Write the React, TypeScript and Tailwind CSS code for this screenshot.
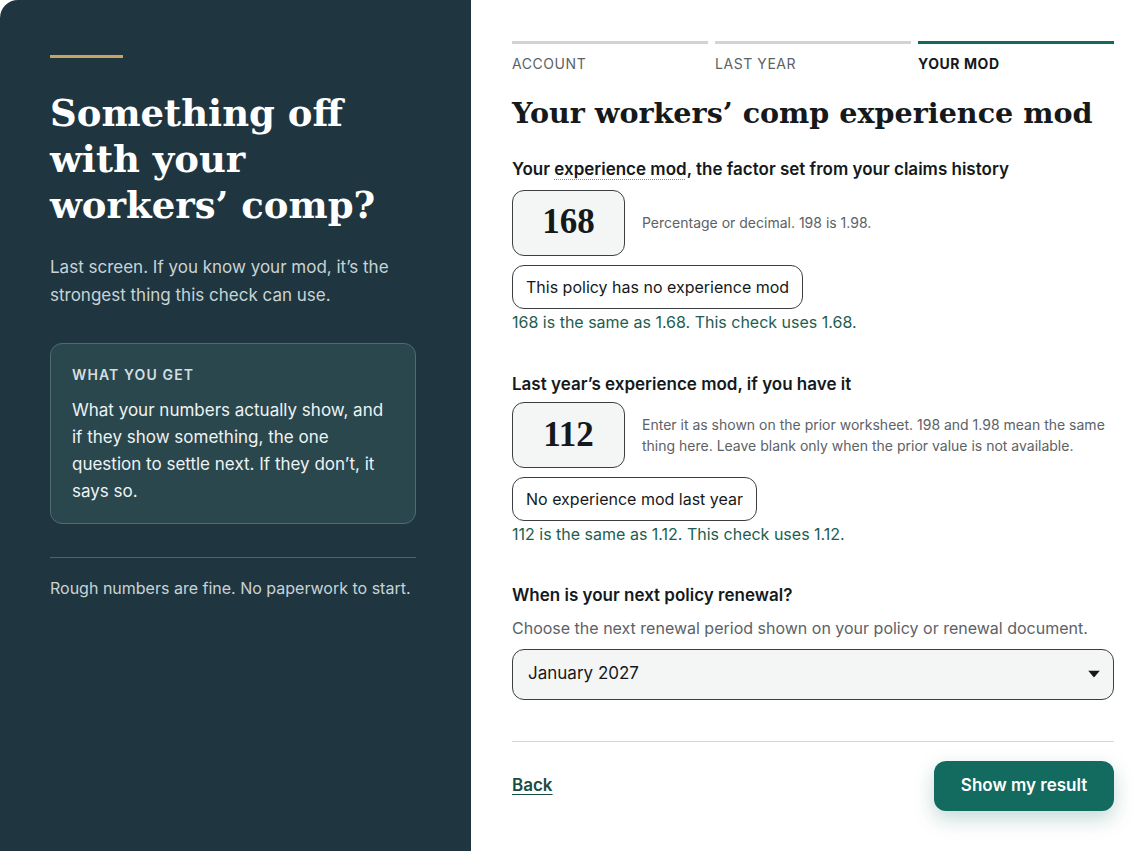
import React, { useState } from "react";

const serif = { fontFamily: '"DejaVu Serif", "Liberation Serif", serif' };
const numSerif = { fontFamily: '"Liberation Serif", "DejaVu Serif", serif' };

const steps = [
	{ label: "Account", active: false },
	{ label: "Last year", active: false },
	{ label: "Your mod", active: true },
];

function ModInput({ value }: { value: string }) {
	return (
		<div
			className="w-[113px] h-[66px] shrink-0 rounded-xl border border-[#3b3f42] bg-[#f4f6f6] flex items-center justify-center text-[35px] font-bold text-[#15191b]"
			style={numSerif}
		>
			{value}
		</div>
	);
}

export default function App() {
	const [renewal, setRenewal] = useState("January 2027");

	return (
		<div className="min-h-screen flex bg-white font-['Inter','Noto_Sans',sans-serif]">
			{/* Left intro panel */}
			<aside className="w-[471px] shrink-0 min-h-[851px] bg-[#1f3640] rounded-tl-[18px] pl-[50px] pr-[55px] pt-[55px]">
				<div className="w-[73px] h-[3px] bg-[#c9a360]" />
				<h1 className="mt-[32px] text-[37px] leading-[46px] font-bold text-white" style={serif}>
					Something off with your workers’ comp?
				</h1>
				<p className="mt-[25px] text-[17px] leading-[28px] text-[#c9d3d5]">
					Last screen. If you know your mod, it’s the strongest thing this check can use.
				</p>
				<div className="mt-[34px] rounded-xl border border-[#516c70] bg-[#2a474e] px-[21px] pt-[20px] pb-[18px]">
					<div className="text-[14px] font-semibold tracking-[0.08em] text-[#d5dedf]">WHAT YOU GET</div>
					<p className="mt-[12px] text-[17px] leading-[27px] text-[#eef3f3]">
						What your numbers actually show, and if they show something, the one question to settle next. If
						they don’t, it says so.
					</p>
				</div>
				<div className="mt-[33px] h-px bg-[#4d666b]" />
				<p className="mt-[18px] text-[16px] text-[#c9d3d5]">Rough numbers are fine. No paperwork to start.</p>
			</aside>

			{/* Right form */}
			<main className="flex-1 pl-[41px] pr-[30px] pt-[41px]">
				<div className="grid grid-cols-3 gap-[7px]">
					{steps.map((s) => (
						<div key={s.label}>
							<div className={s.active ? "h-[3px] bg-[#16685c]" : "h-[3px] bg-[#d3d3d3]"} />
							<div
								className={
									s.active
										? "mt-[9px] text-[14px] uppercase tracking-[0.04em] font-bold text-[#15191b]"
										: "mt-[9px] text-[14px] uppercase tracking-[0.04em] text-[#5c6266]"
								}
							>
								{s.label}
							</div>
						</div>
					))}
				</div>

				<h2
					className="mt-[19px] text-[28.6px] leading-[40px] font-bold text-[#15191b] whitespace-nowrap"
					style={serif}
				>
					Your workers’ comp experience mod
				</h2>

				{/* Current mod */}
				<div className="mt-[24px] text-[17px] font-semibold text-[#15191b]">
					Your{" "}
					<span className="underline decoration-dotted decoration-[#8a8f92] underline-offset-[4px] decoration-1">
						experience mod
					</span>
					, the factor set from your claims history
				</div>
				<div className="mt-[7px] flex items-center gap-[17px]">
					<ModInput value="168" />
					<span className="text-[14px] text-[#5c6266]">Percentage or decimal. 198 is 1.98.</span>
				</div>
				<button className="mt-[9px] h-[44px] px-[13px] rounded-xl border border-[#3b3f42] bg-white text-[16px] text-[#15191b]">
					This policy has no experience mod
				</button>
				<p className="mt-[1px] text-[16px] text-[#1d5e50]">168 is the same as 1.68. This check uses 1.68.</p>

				{/* Last year mod */}
				<div className="mt-[38px] text-[17px] font-semibold text-[#15191b]">
					Last year’s experience mod, if you have it
				</div>
				<div className="mt-[5px] flex items-center gap-[17px]">
					<ModInput value="112" />
					<span className="text-[14px] leading-[21px] text-[#5c6266]">
						Enter it as shown on the prior worksheet. 198 and 1.98 mean the same thing here. Leave blank only
						when the prior value is not available.
					</span>
				</div>
				<button className="mt-[9px] h-[44px] px-[13px] rounded-xl border border-[#3b3f42] bg-white text-[16px] text-[#15191b]">
					No experience mod last year
				</button>
				<p className="mt-[1px] text-[16px] text-[#1d5e50]">112 is the same as 1.12. This check uses 1.12.</p>

				{/* Renewal */}
				<div className="mt-[37px] text-[17px] font-semibold text-[#15191b]">When is your next policy renewal?</div>
				<p className="mt-[7px] text-[16px] text-[#5c6266]">
					Choose the next renewal period shown on your policy or renewal document.
				</p>
				<div className="relative mt-[9px]">
					<select
						value={renewal}
						onChange={(e) => setRenewal(e.target.value)}
						className="w-full h-[51px] appearance-none rounded-xl border border-[#3b3f42] bg-[#f4f6f6] pl-[15px] pr-[40px] text-[17px] text-[#15191b]"
					>
						<option>January 2027</option>
						<option>February 2027</option>
						<option>March 2027</option>
					</select>
					<svg
						className="pointer-events-none absolute right-[14px] top-1/2 -translate-y-1/2"
						width="12"
						height="7"
						viewBox="0 0 12 7"
					>
						<path d="M0 0h12L6 7z" fill="#15191b" />
					</svg>
				</div>

				<div className="mt-[41px] h-px bg-[#d6d8d8]" />
				<div className="mt-[19px] flex items-center justify-between">
					<a href="#" className="text-[17px] font-semibold text-[#1a4d42] underline underline-offset-[3px]">
						Back
					</a>
					<button className="h-[50px] w-[180px] rounded-xl bg-[#136a5e] text-white text-[17px] font-semibold shadow-[0_8px_20px_rgba(19,106,94,0.25)]">
						Show my result
					</button>
				</div>
			</main>
		</div>
	);
}
